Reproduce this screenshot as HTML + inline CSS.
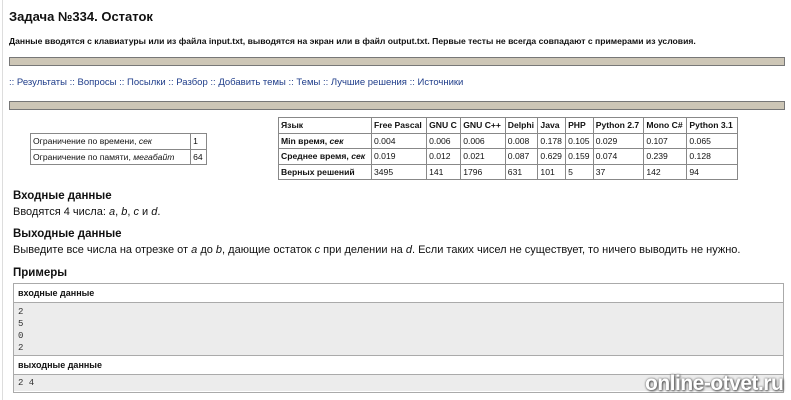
<!DOCTYPE html>
<html><head><meta charset="utf-8"><style>
*{margin:0;padding:0;box-sizing:border-box}
body{width:791px;height:400px;background:#fff;position:relative;overflow:hidden;font-family:"Liberation Sans","DejaVu Sans",sans-serif;color:#111}
.a{position:absolute;white-space:nowrap}
.bar{position:absolute;left:9px;width:776px;height:9px;background:#cdc6b6;border:1px solid #777}
table{position:absolute;border-collapse:collapse;font-size:8.6px}
td{border:1px solid #888;padding:0 2px;height:15.5px;white-space:nowrap}
a{color:#1f3d8a;text-decoration:none}
.mono{font-family:"Liberation Mono",monospace;font-size:9px;color:#333}
</style></head><body>
<div class="a" style="left:2px;top:0;width:1px;height:400px;background:#ddd"></div>
<div class="a" style="left:9px;top:9px;font-size:13px;font-weight:bold">Задача №334. Остаток</div>
<div class="a" style="left:9px;top:36px;font-size:8.6px;font-weight:bold">Данные вводятся с клавиатуры или из файла input.txt, выводятся на экран или в файл output.txt. Первые тесты не всегда совпадают с примерами из условия.</div>
<div class="bar" style="top:57px"></div>
<div class="a" style="left:9px;top:77px;font-size:9.5px;color:#1f3d8a">:: <a>Результаты</a> :: <a>Вопросы</a> :: <a>Посылки</a> :: <a>Разбор</a> :: <a>Добавить темы</a> :: <a>Темы</a> :: <a>Лучшие решения</a> :: <a>Источники</a></div>
<div class="bar" style="top:101px"></div>
<table style="left:30px;top:133px;width:177px">
<tr><td>Ограничение по времени, <i>сек</i></td><td>1</td></tr>
<tr><td>Ограничение по памяти, <i>мегабайт</i></td><td>64</td></tr></table>
<table style="left:278px;top:117px;width:460px">
<tr><td style="width:93px"><b>Язык</b></td><td><b>Free Pascal</b></td><td><b>GNU C</b></td><td><b>GNU C++</b></td><td><b>Delphi</b></td><td><b>Java</b></td><td><b>PHP</b></td><td><b>Python 2.7</b></td><td><b>Mono C#</b></td><td><b>Python 3.1</b></td></tr>
<tr><td><b>Min время, <i>сек</i></b></td><td>0.004</td><td>0.006</td><td>0.006</td><td>0.008</td><td>0.178</td><td>0.105</td><td>0.029</td><td>0.107</td><td>0.065</td></tr>
<tr><td><b>Среднее время, <i>сек</i></b></td><td>0.019</td><td>0.012</td><td>0.021</td><td>0.087</td><td>0.629</td><td>0.159</td><td>0.074</td><td>0.239</td><td>0.128</td></tr>
<tr><td><b>Верных решений</b></td><td>3495</td><td>141</td><td>1796</td><td>631</td><td>101</td><td>5</td><td>37</td><td>142</td><td>94</td></tr></table>
<div class="a" style="left:13px;top:190px;font-size:11.5px;font-weight:bold">Входные данные</div>
<div class="a" style="left:13px;top:206px;font-size:11px">Вводятся 4 числа: <i>a</i>, <i>b</i>, <i>c</i> и <i>d</i>.</div>
<div class="a" style="left:13px;top:228px;font-size:11.5px;font-weight:bold">Выходные данные</div>
<div class="a" style="left:13px;top:244px;font-size:11px">Выведите все числа на отрезке от <i>a</i> до <i>b</i>, дающие остаток <i>c</i> при делении на <i>d</i>. Если таких чисел не существует, то ничего выводить не нужно.</div>
<div class="a" style="left:13px;top:267px;font-size:11.5px;font-weight:bold">Примеры</div>
<div class="a" style="left:13px;top:283px;width:771px;height:110px;border:1px solid #aaa">
<div style="height:19px;border-bottom:1px solid #aaa;font-size:9px;font-weight:bold;padding:4px 4px">входные данные</div>
<div class="mono" style="height:53px;background:#ececec;border-bottom:1px solid #aaa;padding:3px 4px;line-height:12px">2<br>5<br>0<br>2</div>
<div style="height:19px;border-bottom:1px solid #aaa;font-size:9px;font-weight:bold;padding:4px 4px">выходные данные</div>
<div class="mono" style="height:16px;background:#ececec;padding:3px 4px">2 4</div>
</div>
<div class="a" style="left:645px;top:372px;font-size:21px;font-weight:bold;color:#fff;text-shadow:0 0 2px #555,1px 1px 2px #555;letter-spacing:-0.5px">online-otvet.ru</div>
</body></html>
